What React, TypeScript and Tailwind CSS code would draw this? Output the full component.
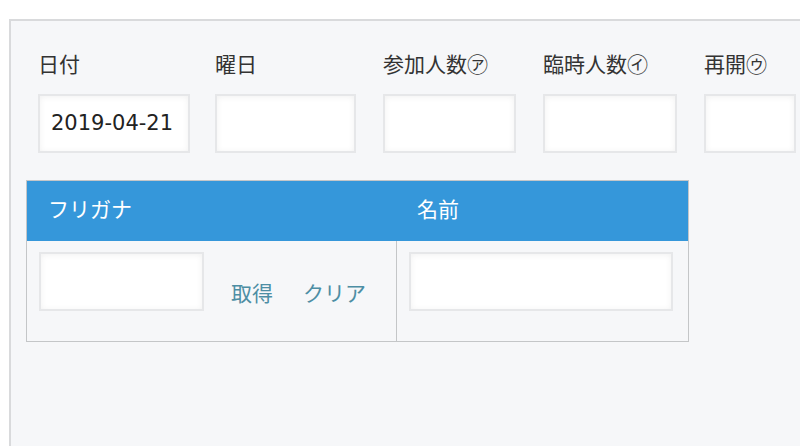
import React from "react";

const font = { fontFamily: '"DejaVu Sans", "Noto Sans CJK JP", sans-serif' };

interface Field {
  label: string;
  width: string;
  value?: string;
}

const fields: Field[] = [
  { label: "日付", width: "w-[152px]", value: "2019-04-21" },
  { label: "曜日", width: "w-[141px]" },
  { label: "参加人数㋐", width: "w-[133px]" },
  { label: "臨時人数㋑", width: "w-[134px]" },
  { label: "再開㋒", width: "w-[92px]" },
];

const Box: React.FC<{ className?: string; value?: string }> = ({ className = "", value }) => (
  <div
    className={
      "h-[59px] border-2 border-[#e6e7e9] bg-white shadow-[inset_0_1px_6px_rgba(0,0,0,0.06)] flex items-center pl-[11px] text-[21px] text-[#222] " +
      className
    }
  >
    {value}
  </div>
);

const App: React.FC = () => {
  return (
    <div className="h-[446px] w-[800px] overflow-hidden bg-white pt-[19px] pl-[9px]" style={font}>
      <div className="h-[440px] border-t-2 border-l-2 border-[#d9dadc] bg-[#f6f7f9] pl-[15px] pt-[30px]">
        {/* top fields */}
        <div className="flex pl-[12px]">
          {fields.map((f, i) => (
            <div key={i} className={"flex flex-col shrink-0 " + (i < fields.length - 1 ? (i === 0 ? "mr-[25px]" : "mr-[27px]") : "")}>
              <div className="h-[28px] leading-[28px] text-[21px] text-[#333] whitespace-nowrap">{f.label}</div>
              <Box className={"mt-[15px] " + f.width} value={f.value} />
            </div>
          ))}
        </div>

        {/* furigana / name table */}
        <div className="mt-[27px] w-[663px] border border-[#c4c6c8]">
          <div className="flex h-[60px] bg-[#3597da] text-white text-[21px]">
            <div className="w-[370px] pl-[21px] flex items-center">フリガナ</div>
            <div className="flex-1 pl-[20px] flex items-center">名前</div>
          </div>
          <div className="flex h-[100px]">
            <div className="w-[370px] border-r border-[#c4c6c8] pl-[12px] pt-[11px] flex items-start">
              <Box className="w-[165px]" />
              <div className="flex gap-[30px] ml-[27px] mt-[27px] text-[21px] text-[#4d8ea4]">
                <span>取得</span>
                <span>クリア</span>
              </div>
            </div>
            <div className="flex-1 pl-[12px] pr-[15px] pt-[11px]">
              <Box className="w-full" />
            </div>
          </div>
        </div>
      </div>
    </div>
  );
};

export default App;
